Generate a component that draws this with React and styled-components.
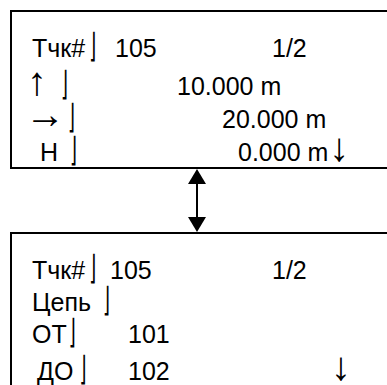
import React from 'react';
import styled, { createGlobalStyle } from 'styled-components';

const GlobalStyle = createGlobalStyle`
    html, body {
        margin: 0;
        padding: 0;
        background: #fff;
        overflow: hidden;
    }
    body {
        font-family: "Liberation Sans", Arial, "DejaVu Sans", sans-serif;
        color: #000;
    }
`;

const Page = styled.div`
    width: 387px;
    height: 385px;
    padding: 10px 0 0 10px;
    box-sizing: border-box;
    overflow: hidden;
`;

const Screen = styled.div`
    width: 400px;
    height: ${props => props.$height}px;
    box-sizing: border-box;
    border: 2px solid #000;
    padding: 20px 0 0 20px;
`;

const Row = styled.div`
    display: flex;
    align-items: baseline;
    height: ${props => props.$lh}px;
    line-height: ${props => props.$lh}px;
    font-size: 25px;
    white-space: pre;
`;

const Cell = styled.span`
    display: inline-block;
    width: ${props => props.$w ? `${props.$w}px` : 'auto'};
    padding-left: ${props => props.$pad || 0}px;
    box-sizing: border-box;
`;

const Floor = styled.span`
    display: inline-block;
    margin-left: ${props => props.$m || 0}px;
    font-family: "DejaVu Sans", sans-serif;
    font-size: 18px;
    transform: scale(1, 1.85);
    transform-origin: 50% 70%;
`;

const Arrow = styled.span`
    display: inline-block;
    margin-left: ${props => props.$m || 0}px;
    font-size: 40px;
`;

const Connector = styled.div`
    height: 63px;
    padding-left: 167px;
    svg {
        display: block;
    }
`;

const top = [
    [{ t: 'Тчк#', f: 4, w: 83 }, { t: '105', w: 157 }, { t: '1/2' }],
    [{ a: '↑', am: -5, w: 21 }, { t: '', f: 8, w: 124 }, { t: '10.000 m' }],
    [{ a: '→', am: -7, w: 33 }, { t: '', f: 3, w: 157 }, { t: '20.000 m' }],
    [{ t: 'H', w: 32, pad: 8 }, { t: '', f: 6, w: 174 }, { t: '0.000 m', a: '↓', am: 1 }],
];

const bottom = [
    [{ t: 'Тчк#', f: 4, w: 78 }, { t: '105', w: 162 }, { t: '1/2' }],
    [{ t: 'Цепь ', f: 5 }],
    [{ t: 'ОТ', f: 2, w: 96 }, { t: '101' }],
    [{ t: 'ДО', f: 6, w: 96, pad: 5 }, { t: '102', w: 203 }, { a: '↓' }],
];

const Lines = ({ rows, lh }) => rows.map((cells, i) => (
    <Row key={i} $lh={lh}>
        {cells.map((c, j) => (
            <Cell key={j} $w={c.w} $pad={c.pad}>
                {c.t}
                {c.f !== undefined && <Floor $m={c.f}>⌋</Floor>}
                {c.a && <Arrow $m={c.am}>{c.a}</Arrow>}
            </Cell>
        ))}
    </Row>
));

const DoubleArrow = () => (
    <svg width="40" height="63" viewBox="0 0 40 63">
        <line x1="20" y1="12" x2="20" y2="51" stroke="#000" strokeWidth="2" />
        <polygon points="20,0 11,15 29,15" fill="#000" />
        <polygon points="20,63 11,48 29,48" fill="#000" />
    </svg>
);

const App = () => (
    <Page>
        <GlobalStyle />
        <Screen $height={159}>
            <Lines rows={top} lh={33} />
        </Screen>
        <Connector>
            <DoubleArrow />
        </Connector>
        <Screen $height={200}>
            <Lines rows={bottom} lh={32} />
        </Screen>
    </Page>
);

export default App;
